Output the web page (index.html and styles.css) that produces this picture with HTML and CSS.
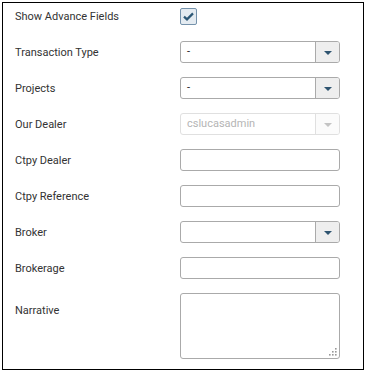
FILE: index.html
```html
<!DOCTYPE html>
<html lang="en">
<head>
  <meta charset="UTF-8" />
  <title>Advance Fields</title>
  <link rel="stylesheet" href="styles.css">
</head>
<body>
<div class="panel">
  <div class="row">
    <label class="lbl">Show Advance Fields</label>
    <span class="check">
      <svg width="11" height="9" viewBox="0 0 11 9"><path d="M1 4.6 L4 7.4 L10 1.4" fill="none" stroke="#2d5876" stroke-width="2.2"/></svg>
    </span>
  </div>

  <div class="row">
    <label class="lbl">Transaction Type</label>
    <div class="select">
      <span class="value">-</span>
      <span class="btn"><i class="arrow"></i></span>
    </div>
  </div>

  <div class="row">
    <label class="lbl">Projects</label>
    <div class="select">
      <span class="value">-</span>
      <span class="btn"><i class="arrow"></i></span>
    </div>
  </div>

  <div class="row">
    <label class="lbl">Our Dealer</label>
    <div class="select disabled">
      <span class="value">cslucasadmin</span>
      <span class="btn"><i class="arrow"></i></span>
    </div>
  </div>

  <div class="row">
    <label class="lbl">Ctpy Dealer</label>
    <input class="field" type="text">
  </div>

  <div class="row">
    <label class="lbl">Ctpy Reference</label>
    <input class="field" type="text">
  </div>

  <div class="row">
    <label class="lbl">Broker</label>
    <div class="select">
      <span class="value"></span>
      <span class="btn"><i class="arrow"></i></span>
    </div>
  </div>

  <div class="row">
    <label class="lbl">Brokerage</label>
    <input class="field" type="text">
  </div>

  <div class="row row-tall">
    <label class="lbl lbl-top">Narrative</label>
    <div class="area-wrap">
      <textarea class="area"></textarea>
      <!-- resize grip -->
      <svg class="grip" width="8" height="8" viewBox="0 0 8 8" fill="#999">
        <rect x="6" y="0" width="1.6" height="1.6"/>
        <rect x="3" y="3" width="1.6" height="1.6"/>
        <rect x="6" y="3" width="1.6" height="1.6"/>
        <rect x="0" y="6" width="1.6" height="1.6"/>
        <rect x="3" y="6" width="1.6" height="1.6"/>
        <rect x="6" y="6" width="1.6" height="1.6"/>
      </svg>
    </div>
  </div>
</div>
</body>
</html>
```

FILE: styles.css
```css
body {
  margin: 0;
  font-family: Roboto, "Liberation Sans", Arial, sans-serif;
  font-size: 11px;
  color: #333;
  background: #fff;
}
.panel {
  box-sizing: border-box;
  width: 362px;
  margin: 2px;
  padding: 2px 0 10px 12px;
  border: 1px solid #000;
}
.row {
  display: flex;
  align-items: center;
  height: 22px;
  margin-bottom: 14px;
}
.row-tall {
  align-items: flex-start;
  height: auto;
  margin-bottom: 0;
}
.lbl {
  width: 165px;
  flex: none;
}
.lbl-top {
  padding-top: 11px;
}
.check {
  box-sizing: border-box;
  width: 17px;
  height: 17px;
  border: 1px solid #7592ab;
  border-radius: 2px;
  background: #e4ebf1;
  display: flex;
  align-items: center;
  justify-content: center;
}
.select {
  box-sizing: border-box;
  width: 160px;
  height: 22px;
  border: 1px solid #aaa;
  border-radius: 3px;
  display: flex;
  overflow: hidden;
}
.select .value {
  flex: 1;
  padding-left: 6px;
  line-height: 20px;
  color: #222;
}
.select .btn {
  width: 23px;
  border-left: 1px solid #aaa;
  background: #eee;
  display: flex;
  align-items: center;
  justify-content: center;
}
.arrow {
  width: 0;
  height: 0;
  border-left: 4px solid transparent;
  border-right: 4px solid transparent;
  border-top: 4px solid #2f5470;
  margin-top: 1px;
}
.select.disabled {
  border-color: #e0e0e0;
}
.select.disabled .value {
  color: #b5b5b5;
}
.select.disabled .btn {
  border-left-color: #e0e0e0;
  background: #fbfbfb;
}
.select.disabled .arrow {
  border-top-color: #c4c4c4;
}
.field {
  box-sizing: border-box;
  width: 160px;
  height: 22px;
  border: 1px solid #aaa;
  border-radius: 3px;
  padding: 0 6px;
  font: inherit;
  outline: none;
}
.area-wrap {
  position: relative;
  width: 160px;
  height: 66px;
}
.area {
  box-sizing: border-box;
  display: block;
  width: 160px;
  height: 66px;
  border: 1px solid #aaa;
  border-radius: 3px;
  resize: none;
  font: inherit;
  outline: none;
}
.grip {
  position: absolute;
  right: 3px;
  bottom: 3px;
}
```
